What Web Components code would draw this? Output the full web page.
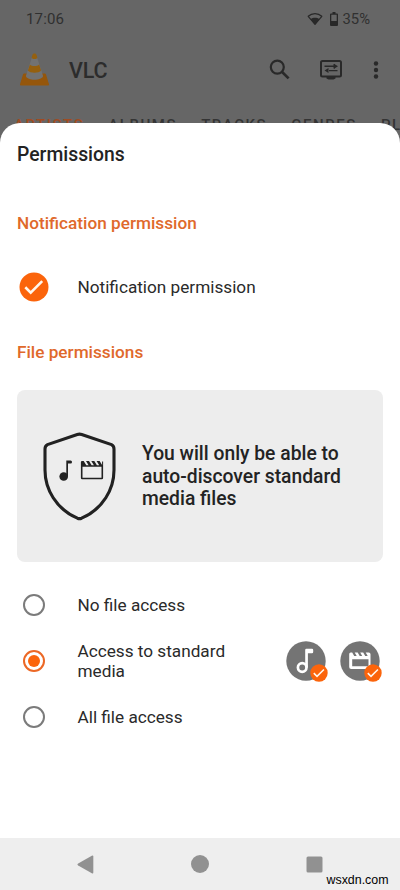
<!DOCTYPE html>
<html lang="en">
<head>
<meta charset="utf-8">
<title>VLC permissions</title>
<style>
html,body{margin:0;width:400px;height:890px;overflow:hidden}
body{font-family:Roboto,"Liberation Sans",sans-serif;color:#212121;background:#fff}
</style>
</head>
<body>
<vlc-screen></vlc-screen>
<script>
const define = (name, html) => customElements.define(name, class extends HTMLElement {
  connectedCallback() {
    if (this.shadowRoot) return;
    const t = document.createElement('template');
    t.innerHTML = html;
    this.attachShadow({mode: 'open'}).append(t.content.cloneNode(true));
  }
});

define('status-bar', `<style>
:host{display:flex;align-items:center;height:38px;padding:0 30px 0 26px;box-sizing:border-box;color:#303030;font-size:15px}
.time{flex:1;letter-spacing:.15px} svg{display:block;fill:#282828}
.wifi{margin-right:7px}.bat{margin-right:5px}.pct{font-size:14.800px}
</style>
<span class="time">17:06</span>
<svg class="wifi" width="16" height="14" viewBox="0 0 16 14"><path d="M1.2 4.3C5 .6 11 .6 14.8 4.3L8 12.3z" fill="none" stroke="#282828" stroke-width="1.2" stroke-linejoin="round"/><path d="M3.600 7.200c2.600-1.900 6.200-1.900 8.800 0L8 12.500z"/></svg>
<svg class="bat" width="8" height="14" viewBox="0 0 8 14"><path d="M2.500 0h3v1.500H7a1 1 0 0 1 1 1V13a1 1 0 0 1-1 1H1a1 1 0 0 1-1-1V2.500a1 1 0 0 1 1-1h1.500zM1.300 2.800v6.200h5.400V2.800z" fill-rule="evenodd"/></svg>
<span class="pct">35%</span>`);

define('app-toolbar', `<style>
:host{display:flex;align-items:center;height:64px;padding:0 20px;box-sizing:border-box}
svg{display:block;flex:none}
h1{margin:1px 0 0 20px;flex:1;font-size:21.500px;font-weight:500;color:#2c2c2c;letter-spacing:-.1px}
</style>
<svg width="29" height="34" viewBox="0 0 29 34"><path d="M4.300 20.500h20.400q1 0 1.300 1l3 9.800q.3 1.200-.8 1.200H.8q-1.100 0-.8-1.200l3-9.800q.3-1 1.300-1z" fill="#95560b"/><path d="M12.300 3.200h4.400L23.100 23c-1.500 5-15.700 5-17.200 0z" fill="#727272"/><path d="M14.500.5c1.300 0 1.800.5 2.200 1.900l.7 2.300c-.7 1.700-5.100 1.700-5.800 0l.7-2.300c.4-1.400.9-1.900 2.200-1.900zM9.900 11.500c1.800 2.100 7.400 2.100 9.200 0l2 6c-2.300 3-10.900 3-13.200 0z" fill="#95600f"/></svg>
<h1>VLC</h1>
<svg width="22" height="22" viewBox="0 0 22 22" fill="none" stroke="#292929"><circle cx="8.300" cy="8.100" r="6.500" stroke-width="2.200"/><path d="M12.900 12.700l6.700 6.700" stroke-width="2.700"/></svg>
<svg style="margin-left:28px" width="24" height="22" viewBox="0 0 24 22"><rect x="2" y="2" width="20" height="15.500" rx="1.500" fill="none" stroke="#292929" stroke-width="2"/><path d="M7.500 18h9v1.500l-2 1h-5l-2-1z" fill="#292929"/><path d="M5.500 7.200h9M10 11.600h8.500M15.200 5v4.400" stroke="#292929" stroke-width="1.400"/><path d="M15 4.700l4 2.500-4 2.500zM9.500 9.100l-4 2.500 4 2.500z" fill="#292929"/></svg>
<svg style="margin:0 1px 0 30px" width="6" height="20" viewBox="0 0 6 20" fill="#292929"><circle cx="3" cy="3.500" r="2.200"/><circle cx="3" cy="10" r="2.200"/><circle cx="3" cy="16.500" r="2.200"/></svg>`);

define('library-tabs', `<style>
:host{display:flex;height:46px;align-items:center;padding-left:14px;gap:24px;overflow:hidden;white-space:nowrap;color:#343434;font-size:15px;font-weight:500;letter-spacing:1.550px}
.on{color:#a04b21}
</style><span class="on">ARTISTS</span><span>ALBUMS</span><span>TRACKS</span><span>GENRES</span><span>PL</span>`);

define('section-title', `<style>:host{display:block;font-size:17.200px;line-height:20px;font-weight:500;color:#e0692b}</style><slot></slot>`);

define('check-mark', `<style>:host{display:block;width:30px;height:30px}svg{display:block}</style>
<svg width="100%" height="100%" viewBox="0 0 30 30"><circle cx="15" cy="15" r="14.500" fill="#fb640b"/><path d="M6.300 15.300l5.400 5.300L23.200 9.200" fill="none" stroke="#fff7ed" stroke-width="2.600"/></svg>`);

define('option-row', `<style>
:host{display:grid;grid-template-columns:60.500px 160px 1fr;align-items:center;font-size:17.200px;line-height:20.500px;color:#2a2a2a}
:host([wide]){grid-template-columns:60.500px 1fr 0}
.trail{display:flex;justify-content:flex-end;gap:12px;padding-right:.7px}
</style><slot name="lead"></slot><div><slot></slot></div><div class="trail"><slot name="trail"></slot></div>`);

define('radio-dot', `<style>
:host{display:flex;width:22px;height:22px;margin-left:6px;box-sizing:border-box;border:2px solid #7b7b7b;border-radius:50%;align-items:center;justify-content:center}
:host([checked]){border-color:#ec6825}
:host([checked])::before{content:"";width:12px;height:12px;border-radius:50%;background:#fb640b}
</style>`);

define('media-badge', `<style>
:host{display:block;position:relative;width:42px;height:41px}
check-mark{position:absolute;right:.5px;bottom:0;width:18px;height:18px}
</style><slot></slot><check-mark></check-mark>`);

define('info-card', `<style>
:host{display:flex;align-items:center;height:172px;box-sizing:border-box;border-radius:8px;background:#ededed;padding-left:25px;gap:25px}
p{margin:2px 0 0;width:220px;font-size:19.300px;line-height:22.500px;font-weight:500;color:#232323}
svg{display:block;flex:none}
</style>
<svg width="75" height="90" viewBox="0 0 75 90"><path d="M35.300 3.500Q37.500 2.700 39.700 3.500L69.500 13.600Q72 14.800 72 18V39C72 58 61 78 39.600 87.200Q37.500 88 35.400 87.200C14 78 3 58 3 39V18Q3 14.800 5.500 13.600Z" fill="none" stroke="#222" stroke-width="3.100"/>
<g fill="#222"><circle cx="21.700" cy="45.500" r="4.300"/><path d="M24.300 29.500h4.400q1.300 0 1.300 1.500t-1.300 1.500h-2.700V45.500h-1.700z"/>
<path d="M39.500 30h2.200l2.600 4.300h2.300L44 30h3l2.600 4.300h2.300L49.300 30h3l2.600 4.300h2.300L54.600 30h3l2.500 4V30.500h1V47q0 1.300-1.300 1.300H40.200q-1.300 0-1.300-1.300V31zM40.500 35.700v11.100h19V35.700z" fill-rule="evenodd"/></g></svg>
<p><slot></slot></p>`);

define('permission-sheet', `<style>
:host{display:flex;flex-direction:column;background:#fff;border-radius:20px 20px 0 0;padding:0 17px;box-sizing:border-box}
h2{margin:20px 0 0;font-size:19.350px;line-height:24px;font-weight:500;color:#232323}
</style>
<h2>Permissions</h2>
<section-title style="margin-top:46px">Notification permission</section-title>
<option-row wide style="height:40px;margin-top:34px"><check-mark slot="lead" style="margin-left:2px"></check-mark>Notification permission</option-row>
<section-title style="margin-top:35px">File permissions</section-title>
<info-card style="margin-top:28px">You will only be able to auto-discover standard media files</info-card>
<option-row style="height:56px;margin-top:15px"><radio-dot slot="lead"></radio-dot>No file access</option-row>
<option-row style="height:56px"><radio-dot checked slot="lead"></radio-dot>Access to standard media
<media-badge slot="trail"><svg width="40" height="40" viewBox="0 0 40 40" style="display:block"><circle cx="20" cy="20" r="19.700" fill="#747474"/><circle cx="16.200" cy="26.500" r="4.300" fill="none" stroke="#fff" stroke-width="2.700"/><path d="M19.200 26.500V9q0-1.200 1.200-1.200h5.600q1.200 0 1.200 1.200v2.100q0 1.200-1.200 1.200H21.900V26.500z" fill="#fff"/></svg></media-badge>
<media-badge slot="trail"><svg width="40" height="40" viewBox="0 0 40 40" style="display:block"><circle cx="20" cy="20" r="19.700" fill="#747474"/><path d="M9.200 13q0-1.500 1.500-1.500h1.500l2 3.500h2.500l-2-3.500h3l2 3.500h2.500l-2-3.500h3l2 3.500h2.500l-2-3.500h3q1.800 0 1.800 1.800V26q0 2-2 2H11.200q-2 0-2-2zM12.200 18.300v6.900h16.300v-6.900z" fill="#fff" fill-rule="evenodd"/></svg></media-badge>
</option-row>
<option-row style="height:56px"><radio-dot slot="lead"></radio-dot>All file access</option-row>`);

define('nav-bar', `<style>
:host{display:grid;grid-template-columns:repeat(3,1fr);background:#eee;height:52px;justify-items:center;align-items:center;padding:0 28px;position:relative;box-sizing:border-box}
svg{display:block;fill:#919191}
span{position:absolute;right:11.500px;bottom:2px;font-size:12.400px;line-height:16px;color:#000;font-family:"Liberation Sans",Arial,sans-serif}
</style>
<svg width="17" height="19" viewBox="0 0 17 19"><path d="M14.800.8q1.500-.7 1.500.8v15.800q0 1.500-1.500.8L1.200 10.400q-1.500-.9 0-1.800z"/></svg>
<svg width="18" height="18"><circle cx="9" cy="9" r="9"/></svg>
<svg width="17" height="17"><rect x=".5" y=".5" width="16" height="16" rx="1.500"/></svg>
<span>wsxdn.com</span>`);

define('vlc-screen', `<style>
:host{display:grid;grid-template:123px 715px 52px / 400px;width:400px;height:890px;overflow:hidden}
.app{grid-area:1/1/3/2;background:#666;min-width:0}
permission-sheet{grid-area:2/1;z-index:1}
nav-bar{grid-area:3/1}
</style>
<div class="app"><status-bar></status-bar><app-toolbar></app-toolbar><library-tabs></library-tabs></div>
<permission-sheet></permission-sheet><nav-bar></nav-bar>`);
</script>
</body>
</html>
